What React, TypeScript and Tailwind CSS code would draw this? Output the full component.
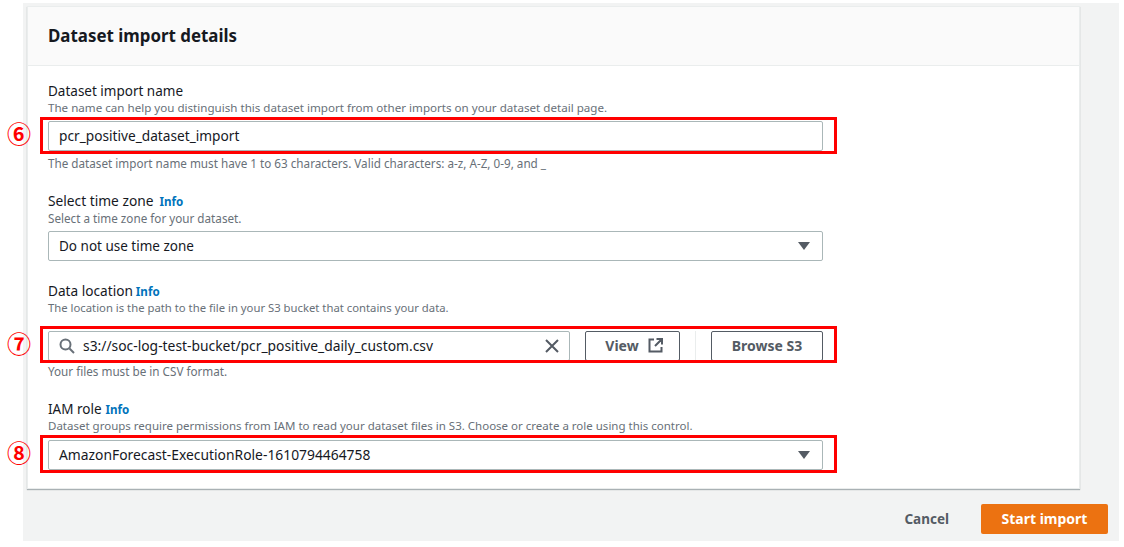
import type { ReactNode } from 'react';

const font = { sans: 'font-["Noto_Sans",sans-serif]' };

function Caret() {
  return (
    <svg width="12" height="8" viewBox="0 0 12 8" className="mr-[2px] shrink-0">
      <path d="M0 0h12L6 8z" fill="#545b64" />
    </svg>
  );
}

// red annotation box + circled number, sits over the control
function Marked({ num, box = '-top-[5px] -bottom-[3px]', children }: { num: string; box?: string; children: ReactNode }) {
  return (
    <div className="relative">
      {children}
      <div className={`absolute -left-2 -right-[14px] border-[3px] border-[#ff0000] ${box}`} />
      <span className='absolute -left-[41px] top-[calc(50%-3px)] -translate-y-1/2 text-[24px] font-bold leading-none text-[#ff0000] font-["Noto_Sans_CJK_JP",sans-serif]'>
        {num}
      </span>
    </div>
  );
}

type FieldProps = {
  label: string;
  labelSize?: string;
  infoGap?: string;
  desc: string;
  descSize?: string;
  descH?: string;
  hint?: string;
  hintMt?: string;
  hintSize?: string;
  children: ReactNode;
};

function Field({
  label,
  labelSize = 'text-[13.5px]',
  infoGap,
  desc,
  descSize = 'text-[11.6px]',
  descH = 'h-[21px]',
  hint,
  hintMt = 'mt-1',
  hintSize = 'text-[11.7px]',
  children,
}: FieldProps) {
  return (
    <div>
      <div className={`h-[19px] leading-[20px] text-[#16191f] ${labelSize}`}>
        {label}
        {infoGap && <span className={`text-[11.6px] font-bold text-[#0073bb] ${infoGap}`}>Info</span>}
      </div>
      <div className={`leading-[16px] text-[#687078] ${descH} ${descSize}`}>{desc}</div>
      {children}
      {hint && <div className={`leading-[16px] text-[#687078] ${hintMt} ${hintSize}`}>{hint}</div>}
    </div>
  );
}

const inputCls = 'flex h-[30px] items-center rounded-[2px] border border-[#aab7b8] bg-white px-[10px] text-[#16191f]';
const btnCls = 'flex h-[30px] items-center justify-center rounded-[2px] border border-[#545b64] bg-white pb-[1px] text-[14px] font-bold text-[#545b64]';

export default function App() {
  return (
    <div className={`h-[547px] w-[1124px] overflow-hidden bg-white pl-[23px] pr-[5px] pt-[3px] ${font.sans}`}>
      <div className="h-[538px] bg-[#f2f3f3] pl-[4px] pr-[11px] pt-[3px]">
        <div className="mr-[28px] h-[483px] border border-[#eaeded] bg-white shadow-[0_1px_1px_0_rgba(0,28,36,0.3)]">
          <div className="flex h-[59px] items-center border-b border-[#eaeded] bg-[#fafafa] px-5 text-[16.9px] font-bold text-[#16191f]">
            Dataset import details
          </div>
          <div className="flex w-[815px] flex-col gap-5 px-5 pt-[15px]">
            <Field
              label="Dataset import name"
              desc="The name can help you distinguish this dataset import from other imports on your dataset detail page."
              hint="The dataset import name must have 1 to 63 characters. Valid characters: a-z, A-Z, 0-9, and _"
            >
              <Marked num="⑥" box="-top-[4px] -bottom-[3px]">
                <div className={`${inputCls} text-[13.7px]`}>pcr_positive_dataset_import</div>
              </Marked>
            </Field>
            <Field
              label="Select time zone"
              labelSize="text-[13.75px]"
              infoGap="ml-[6px]"
              desc="Select a time zone for your dataset."
              descSize="text-[11.7px]"
            >
              <div className={`${inputCls} justify-between text-[13.5px]`}>
                Do not use time zone
                <Caret />
              </div>
            </Field>
            <Field
              label="Data location"
              labelSize="text-[13.65px]"
              infoGap="ml-[3px]"
              desc="The location is the path to the file in your S3 bucket that contains your data."
              descSize="text-[11.3px]"
              descH="h-[31px]"
              hint="Your files must be in CSV format."
              hintMt="mt-[2px]"
            >
              <Marked num="⑦" box="-top-[5px] -bottom-[2px]">
                <div className="flex items-center">
                  <div className={`${inputCls} w-[522px] justify-between text-[13.85px]`}>
                    <div className="flex items-center gap-[8px]">
                      <svg width="16" height="16" viewBox="0 0 16 16" fill="none" stroke="#687078" strokeWidth="2">
                        <circle cx="6.5" cy="6.5" r="5" />
                        <path d="M10.5 10.5l4.5 4.5" />
                      </svg>
                      s3://soc-log-test-bucket/pcr_positive_daily_custom.csv
                    </div>
                    <svg width="14" height="14" viewBox="0 0 14 14" fill="none" stroke="#545b64" strokeWidth="2">
                      <path d="M1 1l12 12M13 1L1 13" />
                    </svg>
                  </div>
                  <div className={`${btnCls} ml-[15px] w-[95px] gap-[9px] pl-[3px]`}>
                    View
                    <svg width="15" height="15" viewBox="0 0 15 15" fill="none" stroke="#545b64" strokeWidth="2">
                      <path d="M6 1.5H1.5v12h12V9M8.5 1h5.5v5.5M14 1L7 8" />
                    </svg>
                  </div>
                  <div className="mx-[15px] h-[30px] w-px bg-[#eaeded]" />
                  <div className={`${btnCls} w-[112px]`}>Browse S3</div>
                </div>
              </Marked>
            </Field>
            <Field
              label="IAM role"
              infoGap="ml-[4px]"
              desc="Dataset groups require permissions from IAM to read your dataset files in S3. Choose or create a role using this control."
              descSize="text-[11.5px]"
              descH="h-[22px]"
            >
              <Marked num="⑧">
                <div className={`${inputCls} justify-between text-[13.85px]`}>
                  AmazonForecast-ExecutionRole-1610794464758
                  <Caret />
                </div>
              </Marked>
            </Field>
          </div>
        </div>
        <div className="mt-[15px] flex items-center justify-end">
          <span className="mr-8 text-[13.5px] font-bold text-[#545b64]">Cancel</span>
          <div className="flex h-[30px] w-[127px] items-center justify-center rounded-[2px] bg-[#ec7211] pb-[1px] text-[14px] font-bold text-white">
            Start import
          </div>
        </div>
      </div>
    </div>
  );
}
